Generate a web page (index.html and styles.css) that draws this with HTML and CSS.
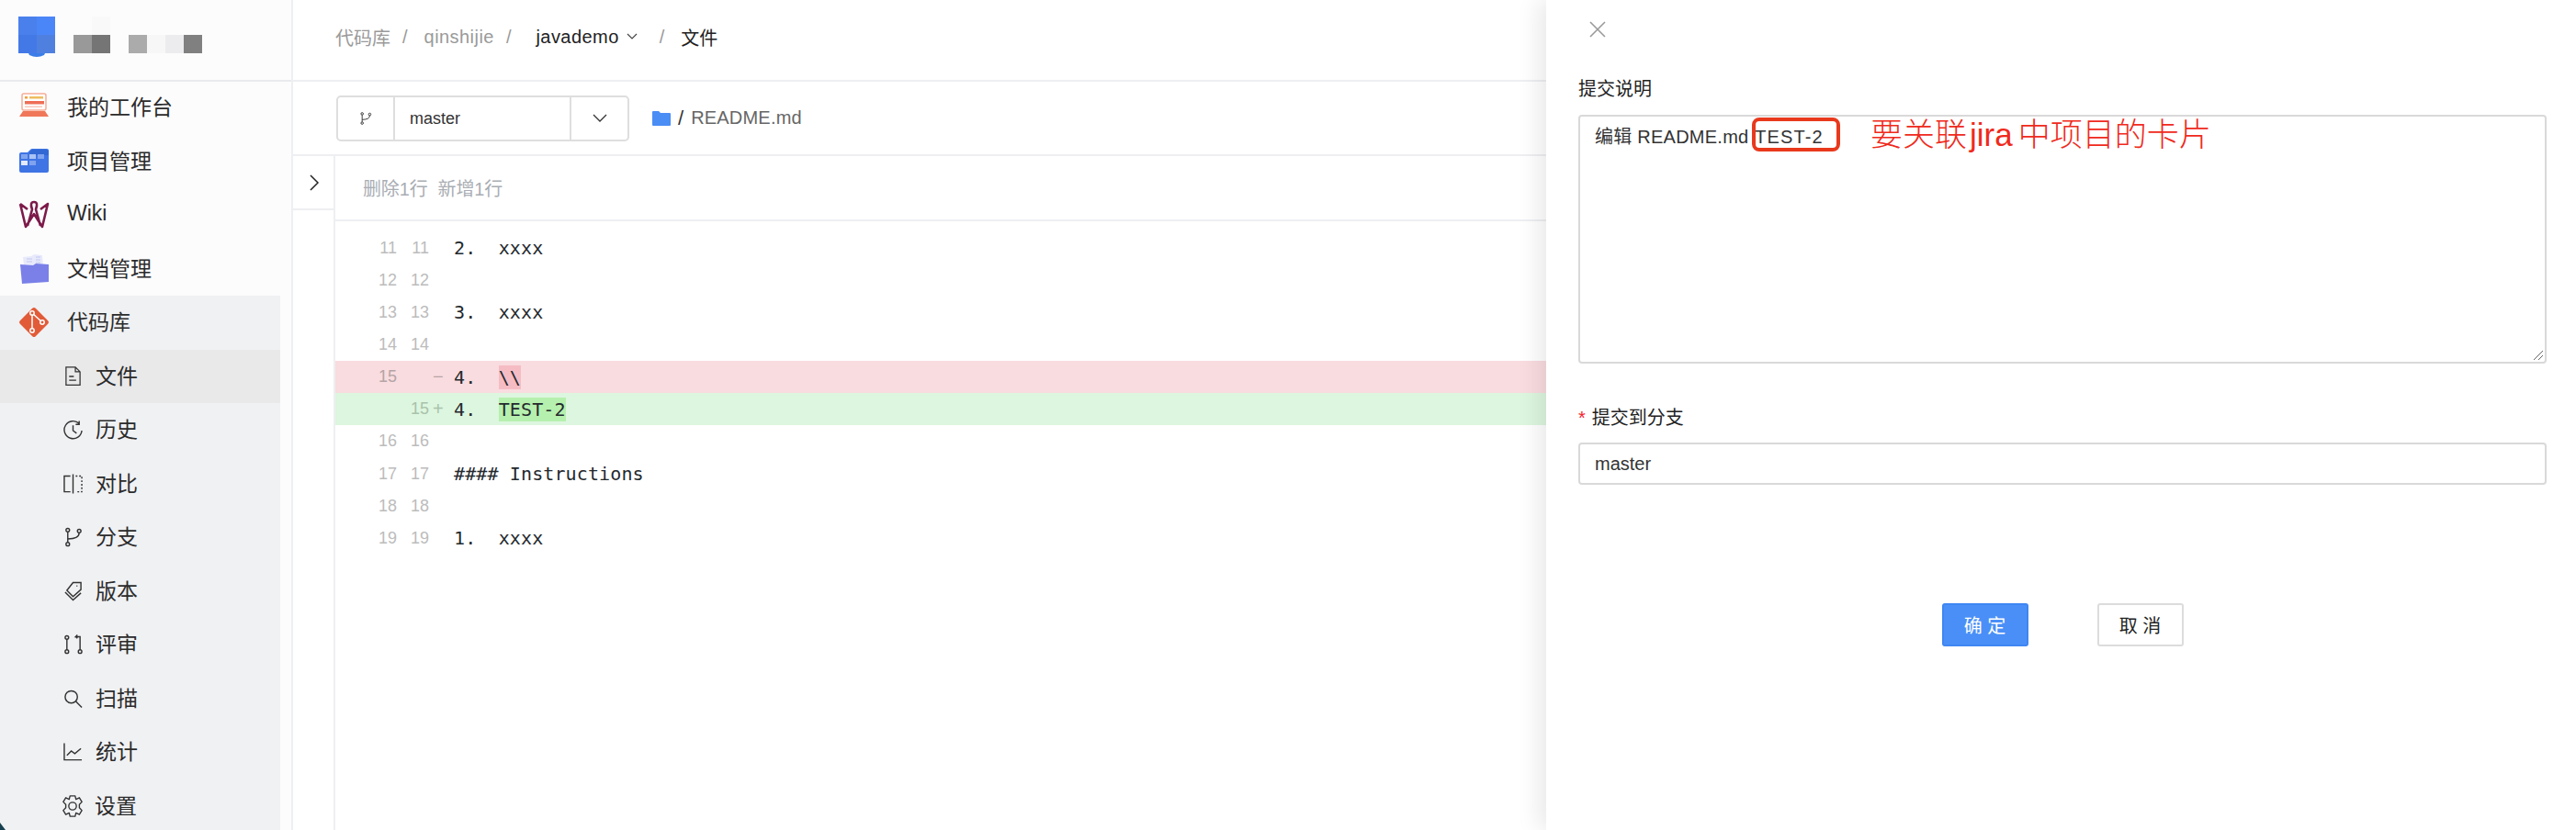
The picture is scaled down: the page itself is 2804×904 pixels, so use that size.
FILE: index.html
```html
<!DOCTYPE html>
<html lang="zh">
<head>
<meta charset="utf-8">
<title>README.md</title>
<link rel="stylesheet" href="styles.css">
</head>
<body>
<div class="app">
  <aside class="sidebar">
    <div class="brand">
      <svg class="brand-mark" width="230" height="64" viewBox="0 0 230 64">
        <path d="M30 56h20l-2 4q-8 4-16 0z" fill="#3b7de8"/>
        <rect x="20" y="18" width="20" height="20" fill="#4a80ec"/><rect x="40" y="18" width="20" height="20" fill="#4b86f8"/>
        <rect x="20" y="38" width="20" height="20" fill="#4379e6"/><rect x="40" y="38" width="20" height="20" fill="#4f80e0"/>
        <rect x="100" y="18" width="20" height="20" fill="#f9f9fa"/>
        <rect x="80" y="38" width="20" height="20" fill="#999"/><rect x="100" y="38" width="20" height="20" fill="#757575"/>
        <rect x="140" y="38" width="20" height="20" fill="#ababab"/><rect x="160" y="38" width="20" height="20" fill="#f7f7f8"/>
        <rect x="180" y="38" width="20" height="20" fill="#ececee"/><rect x="200" y="38" width="20" height="20" fill="#808080"/>
      </svg>
    </div>
    <nav class="menu">
      <a class="item">
        <svg class="app-icon" viewBox="0 0 34 34"><rect x="4" y="2" width="26" height="18" rx="2" fill="#fff" stroke="#f6ad98" stroke-width="1.5"/><rect x="7" y="5" width="3" height="2.5" fill="#f0a040"/><rect x="12" y="5" width="15" height="2.5" fill="#eebc5e"/><rect x="7" y="10" width="21" height="3.5" fill="#ee6e55"/><rect x="7" y="15.500" width="19" height="1.500" fill="#f8c8b8"/><path d="M5 21h24l4 6H1z" fill="#f0775a"/></svg>
        <span>我的工作台</span>
      </a>
      <a class="item">
        <svg class="app-icon" viewBox="0 0 34 34"><path d="M1 9q0-2 2-2h7l3-3q1-1 2-1h16q2 0 2 2v22q0 2-2 2H3q-2 0-2-2z" fill="#3f74e4"/><path d="M12 7l3-3h16q2 0 2 2v4H12z" fill="#3268d4"/><rect x="3" y="9" width="7" height="5" fill="#7fa3ee"/><rect x="12" y="9" width="7" height="5" fill="#a9c3f5"/><rect x="21" y="9" width="7" height="5" fill="#7fa3ee"/><rect x="3" y="16" width="7" height="5" fill="#e2eafb"/><rect x="12" y="16" width="7" height="5" fill="#7fa3ee"/></svg>
        <span>项目管理</span>
      </a>
      <a class="item">
        <svg class="app-icon" viewBox="0 0 34 34"><path d="M2 5l6 25 9-14 9 14 6-25-8 6M2 5l8 6M10 29l5-18q-3-8 2-8t2 8l5 18" fill="none" stroke="#7d1a4a" stroke-width="2.600" stroke-linejoin="round"/></svg>
        <span>Wiki</span>
      </a>
      <a class="item">
        <svg class="app-icon" viewBox="0 0 34 34"><path d="M5 4l9-1 3-2 9 1 1 12H6z" fill="#e8eafb"/><path d="M9 6h6M9 9h6M19 4h5M19 7h5M19 10h5" stroke="#c3c8ee" stroke-width="1"/><path d="M2 12l14 1 3-2 14 1v19l-29 2z" fill="#7a80e8"/></svg>
        <span>文档管理</span>
      </a>
      <div class="group">
        <a class="item">
          <svg class="app-icon" viewBox="0 0 34 34"><rect x="5" y="5" width="24" height="24" rx="2.500" transform="rotate(45 17 17)" fill="#e25b38"/><path d="M15 7v19M15 7l11 10" fill="none" stroke="#fff" stroke-width="1.500"/><circle cx="15" cy="7" r="2.200" fill="#e25b38" stroke="#fff" stroke-width="1.500"/><circle cx="15" cy="26" r="2.200" fill="#e25b38" stroke="#fff" stroke-width="1.500"/><circle cx="26" cy="17" r="2.200" fill="#e25b38" stroke="#fff" stroke-width="1.500"/></svg>
          <span>代码库</span>
        </a>
        <a class="sub current">
          <svg class="sub-icon" viewBox="0 0 22 26"><path d="M2 1h12l6 6v17H2zM14 1v6h6M6 13h6M6 18h9"/></svg>
          <span>文件</span>
        </a>
        <a class="sub">
          <svg class="sub-icon" viewBox="0 0 22 22"><path d="M18 4a10 10 0 1 0 3 8M18 1v4h-4M11 6v6l4 3"/></svg>
          <span>历史</span>
        </a>
        <a class="sub">
          <svg class="sub-icon" viewBox="0 0 22 22"><path d="M8 2H1v18h7M11 0v22"/><path d="M14 2h7v18h-7" stroke-dasharray="2 2"/></svg>
          <span>对比</span>
        </a>
        <a class="sub">
          <svg class="sub-icon" viewBox="0 0 22 22"><circle cx="5" cy="3" r="2"/><circle cx="5" cy="19" r="2"/><circle cx="18" cy="4" r="2"/><path d="M5 5v12M5 13q13 0 13-7"/></svg>
          <span>分支</span>
        </a>
        <a class="sub">
          <svg class="sub-icon" viewBox="0 0 22 22"><path d="M11 1h9v8l-9 8-7-7zM15 5h1M2 12l9 9 9-8"/></svg>
          <span>版本</span>
        </a>
        <a class="sub">
          <svg class="sub-icon" viewBox="0 0 22 22"><circle cx="4" cy="3" r="2"/><circle cx="4" cy="19" r="2"/><circle cx="19" cy="19" r="2"/><path d="M4 5v12M19 17V2h-5l2-2M14 2l2 2"/></svg>
          <span>评审</span>
        </a>
        <a class="sub">
          <svg class="sub-icon" viewBox="0 0 22 22"><circle cx="9" cy="9" r="7"/><path d="M14 14l7 7"/></svg>
          <span>扫描</span>
        </a>
        <a class="sub">
          <svg class="sub-icon" viewBox="0 0 22 22"><path d="M1 1v19h20M4 15l5-5 4 3 7-6"/></svg>
          <span>统计</span>
        </a>
        <a class="sub">
          <svg class="sub-icon gear" viewBox="0 0 26 26"><circle cx="13" cy="13" r="4.500"/><path d="M10 1h6l1 4 4-2 3 5-3 3v4l3 3-3 5-4-2-1 4h-6l-1-4-4 2-3-5 3-3v-4L2 8l3-5 4 2z" stroke-linejoin="round"/></svg>
          <span>设置</span>
        </a>
      </div>
    </nav>
    <svg class="corner" width="6" height="8" viewBox="0 0 6 8"><path d="M0 0l6 8H0z" fill="#15404f"/></svg>
  </aside>

  <main class="main">
    <header class="crumbs">
      <span class="crumb">代码库</span><span class="sep">/</span>
      <span class="crumb latin">qinshijie</span><span class="sep">/</span>
      <span class="crumb dark latin repo">javademo</span>
      <svg class="crumb-caret" width="12" height="8" viewBox="0 0 12 8"><path d="M1 1l5 5 5-5"/></svg>
      <span class="sep sep-wide">/</span>
      <span class="crumb dark">文件</span>
    </header>
    <div class="toolbar">
      <div class="branch">
        <div class="branch-icon"><svg class="sub-icon small" viewBox="0 0 22 22"><circle cx="5" cy="3" r="2"/><circle cx="5" cy="19" r="2"/><circle cx="18" cy="4" r="2"/><path d="M5 5v12M5 13q13 0 13-7"/></svg></div>
        <div class="branch-name">master</div>
        <div class="branch-caret"><svg width="16" height="10" viewBox="0 0 16 10"><path d="M1 1l7 7 7-7" fill="none" stroke="#333" stroke-width="1.300"/></svg></div>
      </div>
      <svg class="folder" width="20" height="16" viewBox="0 0 20 16"><path d="M0 1q0-1 1-1h6l2 2h10q1 0 1 1v12q0 1-1 1H1q-1 0-1-1z" fill="#4a8df5"/></svg>
      <span class="path-sep">/</span>
      <span class="path">README.md</span>
    </div>
    <div class="content">
      <div class="rail">
        <div class="rail-toggle"><svg width="12" height="18" viewBox="0 0 12 18"><path d="M2 1l8 8-8 8" fill="none" stroke="#222" stroke-width="1.500"/></svg></div>
      </div>
      <section class="diff">
        <div class="diff-head"><span>删除1行</span><span>新增1行</span></div>
        <div class="lines">
          <div class="line"><span class="n1">11</span><span class="n2">11</span><span class="mark"></span><code>2.  xxxx</code></div>
          <div class="line"><span class="n1">12</span><span class="n2">12</span><span class="mark"></span><code></code></div>
          <div class="line"><span class="n1">13</span><span class="n2">13</span><span class="mark"></span><code>3.  xxxx</code></div>
          <div class="line"><span class="n1">14</span><span class="n2">14</span><span class="mark"></span><code></code></div>
          <div class="line del"><span class="n1">15</span><span class="n2"></span><span class="mark">−</span><code>4.  <b>\\</b></code></div>
          <div class="line add"><span class="n1"></span><span class="n2">15</span><span class="mark">+</span><code>4.  <b>TEST-2</b></code></div>
          <div class="line"><span class="n1">16</span><span class="n2">16</span><span class="mark"></span><code></code></div>
          <div class="line"><span class="n1">17</span><span class="n2">17</span><span class="mark"></span><code>#### Instructions</code></div>
          <div class="line"><span class="n1">18</span><span class="n2">18</span><span class="mark"></span><code></code></div>
          <div class="line"><span class="n1">19</span><span class="n2">19</span><span class="mark"></span><code>1.  xxxx</code></div>
        </div>
      </section>
    </div>
  </main>

  <aside class="drawer">
    <svg class="close" width="18" height="18" viewBox="0 0 18 18"><path d="M1 1l16 16M17 1L1 17"/></svg>
    <label class="field-label first">提交说明</label>
    <div class="textarea">
      <span class="textarea-text">编辑 README.md <span class="ticket">TEST-2</span></span>
      <span class="callout-box"></span>
      <span class="callout-text">要关联<span class="callout-latin">jira</span>中项目的卡片</span>
      <svg class="grip" width="12" height="12" viewBox="0 0 12 12"><path d="M11 1L1 11M11 6l-5 5"/></svg>
    </div>
    <label class="field-label second"><i>*</i>提交到分支</label>
    <div class="input">master</div>
    <div class="actions">
      <button class="btn primary">确 定</button>
      <button class="btn">取 消</button>
    </div>
  </aside>
</div>
</body>
</html>
```
FILE: styles.css
```css
* { box-sizing: border-box; }
html, body { margin: 0; padding: 0; height: 100%; }
body {
  font-family: "Liberation Sans", "Noto Sans CJK SC", sans-serif;
  color: #222;
  background: #fff;
  overflow: hidden;
}
.app { display: flex; height: 904px; position: relative; overflow: hidden; }

/* sidebar */
.sidebar {
  width: 319px;
  flex: none;
  background: #fcfcfd;
  border-right: 2px solid #eeeff3;
  position: relative;
  overflow: hidden;
}
.brand { height: 89px; border-bottom: 2px solid #e9eaed; }
.brand-mark { display: block; }
.menu { display: flex; flex-direction: column; margin-top: -1px; }
.group { margin-right: 12px; background: #f0f1f3; }
.item, .sub {
  display: flex;
  align-items: center;
  height: 58.5px;
  font-size: 23px;
  color: #2b2b2b;
}
.item span, .sub span { margin-bottom: 4px; }
.item { padding-left: 20px; gap: 19px; }
.sub { padding-left: 69px; gap: 14px; }
.current { background: #e9e9ea; }
.app-icon { width: 34px; height: 34px; flex: none; }
.sub-icon {
  width: 21px;
  height: 22px;
  flex: none;
  fill: none;
  stroke: #333;
  stroke-width: 1.5;
}
.sub-icon.small { width: 14px; height: 16px; }
.sub-icon.gear { width: 24px; height: 24px; margin: 0 -2px 0 -2px; }
.corner { position: absolute; left: 0; bottom: 0; }

/* main */
.main { flex: 1; display: flex; flex-direction: column; min-width: 0; }
.crumbs {
  height: 89px;
  flex: none;
  display: flex;
  align-items: center;
  padding: 0 0 7px 46px;
  font-size: 20px;
  border-bottom: 2px solid #eeeff2;
}
.crumb { color: #9a9a9a; }
.crumb.dark { color: #222; }
.latin { letter-spacing: 0.45px; }
.repo { margin-left: 9px; }
.sep { color: #9a9a9a; margin: 0 18px 0 13px; }
.sep-wide { margin: 0 18px 0 24px; }
.crumb-caret { margin-left: 8px; fill: none; stroke: #444; stroke-width: 1.2; }
.toolbar {
  height: 81px;
  flex: none;
  display: flex;
  align-items: center;
  padding: 0 0 0 47px;
  border-bottom: 2px solid #eeeff2;
}
.branch {
  display: flex;
  width: 319px;
  height: 50px;
  border: 2px solid #dedede;
  border-radius: 5px;
  margin-right: 25px;
}
.branch-icon, .branch-caret { display: flex; align-items: center; justify-content: center; }
.branch-icon { width: 62px; border-right: 2px solid #dedede; }
.branch-name { width: 192px; padding-left: 16px; border-right: 2px solid #dedede; font-size: 18px; line-height: 46px; color: #333; }
.branch-caret { flex: 1; }
.path-sep { font-size: 22px; color: #333; margin: 0 8px 0 8px; }
.path { font-size: 20px; color: #666; letter-spacing: 0.2px; }
.content { flex: 1; display: flex; min-height: 0; }
.rail { width: 46px; flex: none; border-right: 2px solid #eeeff2; }
.rail-toggle {
  height: 59px;
  border-bottom: 2px solid #eeeff2;
  display: flex;
  align-items: center;
  justify-content: center;
  padding-left: 2px;
}
.diff { flex: 1; min-width: 0; }
.diff-head {
  height: 71px;
  border-bottom: 2px solid #eeeff2;
  display: flex;
  align-items: center;
  gap: 11px;
  padding: 0 0 0 30px;
  font-size: 20px;
  letter-spacing: -0.15px;
  color: #a9adb3;
}
.lines { padding-top: 11.5px; }
.line { display: flex; height: 35.15px; align-items: center; }
.n1, .n2 { font-size: 18px; color: #bcbcbc; text-align: right; flex: none; }
.n1 { width: 67px; }
.n2 { width: 35px; }
.mark { width: 27px; padding-left: 4px; flex: none; font-size: 20px; color: #bcbcbc; }
code {
  font-family: "DejaVu Sans Mono", "Liberation Mono", monospace;
  font-size: 20px;
  letter-spacing: 0.12px;
  color: #24292e;
  white-space: pre;
}
code b { font-weight: 400; padding: 1px 0; }
.del { background: #f9dcdf; }
.del b { background: #f5bcc4; }
.add { background: #ddf6df; }
.add b { background: #b6f0ae; }
.add .n2, .add .mark { color: #a9c2ab; }
.del .n1, .del .mark { color: #b4a4a6; }

/* drawer */
.drawer {
  position: absolute;
  top: 0;
  right: 0;
  bottom: 0;
  width: 1121px;
  background: #fff;
  padding: 23px 32px 0 35px;
  box-shadow: -8px 0 24px rgba(0, 0, 0, 0.09);
}
.close { display: block; margin-left: 12px; fill: none; stroke: #999; stroke-width: 1.6; }
.field-label { display: block; font-size: 20px; line-height: 28px; color: #222; }
.field-label.first { margin-top: 42px; }
.field-label.second { margin-top: 45px; }
.field-label i { color: #f5222d; font-style: normal; margin-right: 7px; }
.textarea {
  position: relative;
  height: 271px;
  margin-top: 14px;
  border: 2px solid #d9d9d9;
  border-radius: 4px;
  padding: 6px 16px;
  font-size: 20px;
  line-height: 32px;
  color: #333;
}
.textarea-text { letter-spacing: 0.25px; }
.ticket { margin-left: 1px; letter-spacing: 1.1px; }
.callout-box {
  position: absolute;
  left: 187px;
  top: 1px;
  width: 96px;
  height: 37px;
  border: 4px solid #e8391d;
  border-radius: 8px;
}
.callout-text {
  position: absolute;
  left: 316px;
  top: -3px;
  font-size: 35px;
  line-height: 46px;
  color: #ef2a1c;
  font-weight: 300;
  white-space: nowrap;
}
.callout-latin { margin: 0 6px 0 3px; }
.grip { position: absolute; right: 1px; bottom: 1px; fill: none; stroke: #666; stroke-width: 1; }
.input {
  height: 46px;
  margin-top: 13px;
  border: 2px solid #d9d9d9;
  border-radius: 4px;
  padding: 0 16px;
  font-size: 20px;
  line-height: 42px;
  color: #333;
}
.actions { display: flex; justify-content: center; gap: 75px; margin-top: 129px; }
.btn {
  width: 94px;
  height: 47px;
  font: inherit;
  font-size: 20px;
  color: #222;
  background: #fff;
  border: 2px solid #dcdcdc;
  border-radius: 3px;
}
.btn.primary { background: #4a8ff7; border-color: #3f86f2; color: #fff; }
```
